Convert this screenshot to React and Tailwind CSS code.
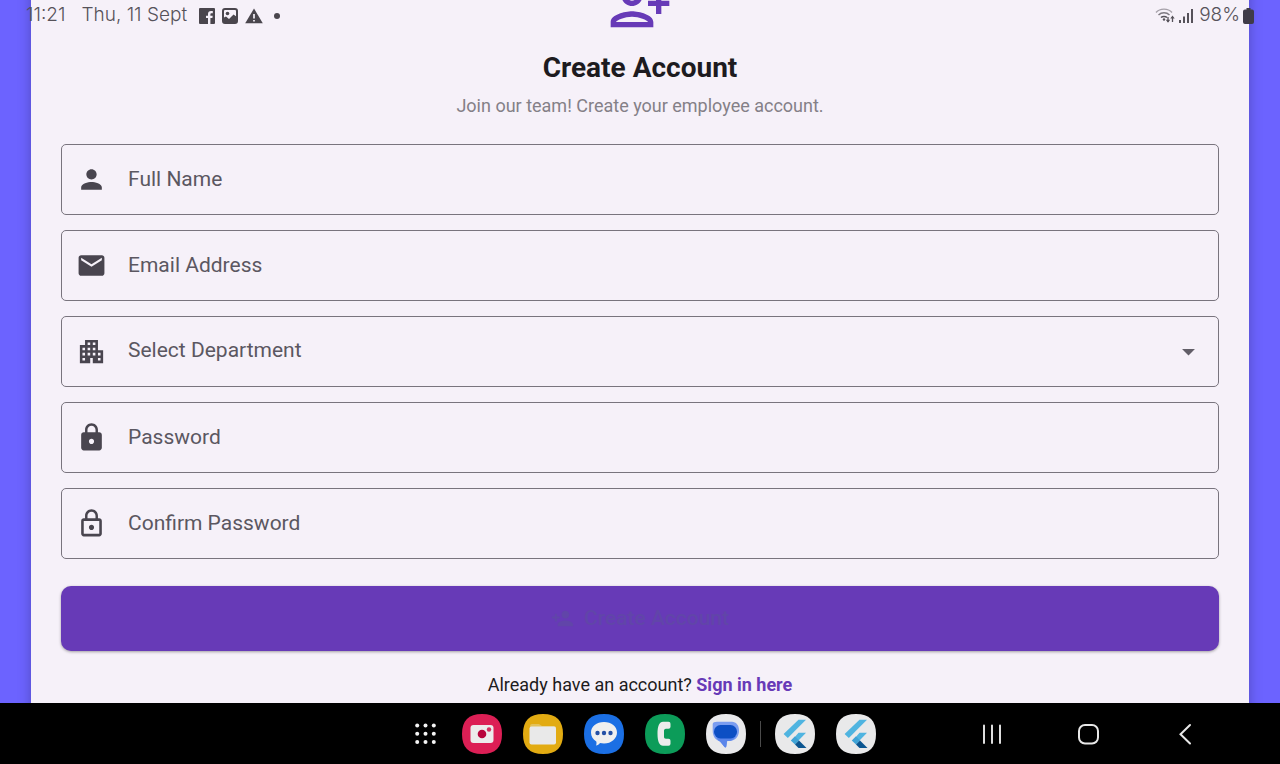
import React from "react";
import {
  MdPerson,
  MdEmail,
  MdApartment,
  MdLock,
  MdLockOutline,
  MdPersonAdd,
  MdArrowDropDown,
} from "react-icons/md";

function FacebookGlyph() {
  return (
    <svg viewBox="0 0 16 16" className="size-4" aria-hidden="true">
      <path
        fill="currentColor"
        d="M1 0h14a1 1 0 0 1 1 1v14a1 1 0 0 1-1 1h-3.600V10h2l.3-2.300h-2.300V6.300c0-.7.3-1.100 1.200-1.100h1.200V3.100c-.3 0-1-.1-1.800-.1-1.900 0-3 1.100-3 3v1.700H7V10h2v6H1a1 1 0 0 1-1-1V1a1 1 0 0 1 1-1z"
      />
    </svg>
  );
}

function PictureGlyph() {
  return (
    <svg viewBox="0 0 16 16" className="size-4" aria-hidden="true">
      <rect x="1" y="1" width="14" height="14" rx="2" fill="none" stroke="currentColor" strokeWidth="2" />
      <circle cx="5.500" cy="5.500" r="1.800" fill="currentColor" />
      <path fill="currentColor" d="M1 10l3-1.500 3 2.500 4.500-4.500L15 9v4a2 2 0 0 1-2 2H3a2 2 0 0 1-2-2z" />
    </svg>
  );
}

function WarningGlyph() {
  return (
    <svg viewBox="0 0 18 16" className="h-4 w-[18px]" aria-hidden="true">
      <path fill="currentColor" d="M9 .5L17.800 15.300H.2z" />
      <path d="M9 6v4.500M9 12v1.600" stroke="#f6f1f9" strokeWidth="1.700" />
    </svg>
  );
}

function WifiGlyph() {
  return (
    <svg viewBox="0 0 20 17" className="h-[17px] w-5" fill="none" stroke="currentColor" aria-hidden="true">
      <path d="M1 5.500C5 1 13 1 17 5.500" strokeWidth="1.300" opacity=".5" />
      <path d="M3.500 8C6.500 5 11.500 5 14.500 8" strokeWidth="1.400" opacity=".75" />
      <path d="M6 10.500C7.500 9 10.500 9 12 10.500" strokeWidth="1.500" />
      <circle cx="9" cy="12.500" r="1.200" fill="currentColor" stroke="none" />
      <path d="M13 10v5M17.500 15v-5" strokeWidth="1.300" />
      <path d="M10.800 12.800h4.400L13 15.800zM15.300 11.500h4.400L17.500 8.500z" fill="currentColor" stroke="none" />
    </svg>
  );
}

function SignalGlyph() {
  return (
    <svg viewBox="0 0 14 16" className="h-4 w-3.5" fill="currentColor" aria-hidden="true">
      <rect x="0" y="12" width="2" height="3" />
      <rect x="4" y="8.500" width="2" height="6.500" />
      <rect x="8" y="5" width="2" height="10" />
      <rect x="12" y="1" width="2" height="14" />
    </svg>
  );
}

function BatteryGlyph() {
  return (
    <svg viewBox="0 0 11 16" className="h-4 w-[11px]" fill="currentColor" aria-hidden="true">
      <path d="M3.500 0h4v1.500H9a2 2 0 0 1 2 2V14a2 2 0 0 1-2 2H2a2 2 0 0 1-2-2V3.500a2 2 0 0 1 2-2h1.500z" />
    </svg>
  );
}

function StatusBar() {
  return (
    <header className="absolute inset-x-0 top-0 flex h-[31px] items-center justify-between px-[26px] font-['Inter',sans-serif] text-[19px] text-[#56525a]">
      <div className="flex items-center">
        <span className="font-light">11:21</span>
        <span className="ml-4 font-light">Thu, 11 Sept</span>
        <div className="ml-3 flex items-center gap-[7px] text-[#4a464d]">
          <FacebookGlyph />
          <PictureGlyph />
          <WarningGlyph />
          <span className="ml-1 size-1.5 rounded-full bg-[#4a464d]" />
        </div>
      </div>
      <div className="flex items-center">
        <WifiGlyph />
        <span className="ml-1 mr-1.5"><SignalGlyph /></span>
        <span className="mr-[3px] font-light">98%</span>
        <span className="text-[#3f3b48]"><BatteryGlyph /></span>
      </div>
    </header>
  );
}

const frame =
  "flex h-[71px] items-center rounded-[5px] border border-[#79747e] px-[14px] text-[#49454f]";
const control =
  "h-full min-w-0 flex-1 appearance-none bg-transparent pb-0.5 pl-[21px] text-[21px] text-[#5b5761] outline-none placeholder:text-[#5b5761]";

function Field({ id, label, type, icon: Icon }) {
  return (
    <label htmlFor={id} className={frame}>
      <Icon className="size-[31px]" aria-hidden="true" />
      <input id={id} type={type} placeholder={label} aria-label={label} className={control} />
    </label>
  );
}

function DepartmentField() {
  return (
    <label htmlFor="department" className={frame}>
      <MdApartment className="size-[31px]" aria-hidden="true" />
      <select id="department" defaultValue="" aria-label="Department" className={control}>
        <option value="">Select Department</option>
      </select>
      <MdArrowDropDown className="pointer-events-none size-[31px] text-[#625e68]" aria-hidden="true" />
    </label>
  );
}

const squircle = "M20 0C33.500 0 40 6.500 40 20S33.500 40 20 40 0 33.500 0 20 6.500 0 20 0z";

function AppIcon({ label, fill, children }) {
  return (
    <button type="button" aria-label={label} className="size-10">
      <svg viewBox="0 0 40 40" className="size-10" aria-hidden="true">
        <path d={squircle} fill={fill} />
        {children}
      </svg>
    </button>
  );
}

function FlutterIcon({ label }) {
  return (
    <AppIcon label={label} fill="#e9e9ea">
      <path fill="#4fb4e0" d="M23.500 5.700H31L12.800 24l-4.200-4z" />
      <path fill="#4fb4e0" d="M23.500 18.700H31l-7.500 7.800L16.500 27z" />
      <path fill="#3fa3d6" d="M15.800 26.500l4.200-4.200 4 4.200-4 4z" />
      <path fill="#0b5590" d="M20 30.500l4-4 7.500 7.500H23.500z" />
    </AppIcon>
  );
}

function Taskbar() {
  return (
    <footer className="flex h-[61px] shrink-0 items-center justify-end bg-black pr-[81px]">
      <div className="flex items-center gap-[21px]">
        <button type="button" aria-label="All apps" className="size-[30px]">
          <svg viewBox="0 0 30 30" className="size-[30px]" fill="#f4f4f4" aria-hidden="true">
            {[6.5, 14.7, 23].map((y) =>
              [6.2, 14.5, 22.8].map((x) => (
                <circle key={x + "-" + y} cx={x} cy={y} r="2" />
              ))
            )}
          </svg>
        </button>
        <AppIcon label="Screen recorder" fill="#dc1f55">
          <rect x="8.500" y="11" width="23" height="18" rx="3" fill="#ececec" />
          <circle cx="20" cy="20" r="4.300" fill="#b8053c" />
          <circle cx="27" cy="15.500" r="2.200" fill="#d5305f" />
        </AppIcon>
        <AppIcon label="My files" fill="#e2ab12">
          <path fill="#e3c25a" d="M7 12a2 2 0 0 1 2-2h7l3 2h12a2 2 0 0 1 2 2v4H7z" />
          <rect x="6.500" y="12.500" width="26.500" height="18" rx="2" fill="#e9e9e9" />
        </AppIcon>
        <AppIcon label="Messages" fill="#1b6fe4">
          <path fill="#efefef" d="M20 8c7.500 0 13 4.500 13 10.500S27.500 29.500 20 29.500c-1.500 0-2.800-.2-4-.5-1 1.500-2.500 2.500-4 2.500.5-1 .7-2.500.3-4C9 25.500 7 22.500 7 18.500 7 12.500 12.500 8 20 8z" />
          <circle cx="13.500" cy="19" r="2.200" fill="#2450a5" />
          <circle cx="20" cy="19" r="2.200" fill="#2450a5" />
          <circle cx="26.500" cy="19" r="2.200" fill="#2450a5" />
        </AppIcon>
        <AppIcon label="Phone" fill="#0c9c59">
          <path fill="#ececec" d="M18 7.700h5.500a2 2 0 0 1 2 2v3a2 2 0 0 1-2 2h-2.500c-1.500 0-2 1-2 2v6c0 1 .5 2 2 2h2.500a2 2 0 0 1 2 2v3a2 2 0 0 1-2 2H18c-3.500 0-5.500-4-5.500-12s2-12 5.500-12z" />
        </AppIcon>
        <AppIcon label="Google Messages" fill="#e9e9eb">
          <path fill="#7b9df0" d="M11 7.700h15c4 0 7 3.500 7 8.500 0 6-3 9.500-8.500 10.800h-3.200l-1 5.500c-.2 1-1.100 1.300-1.800.6L14 27.500c-5-1.500-7.300-6-7.300-10.500V10c0-1.500 2-2.300 4.300-2.300z" />
          <path fill="#5c86ea" d="M10 22h20c-1.500 3-4 4.500-7 5h-2l-.7 5.500c-.2 1-1.100 1.300-1.800.6L14 27.500c-2-.8-3-2.500-4-5.500z" />
          <rect x="8" y="11" width="23" height="13.500" rx="6.500" fill="#0d4fc4" />
        </AppIcon>
      </div>
      <span className="mx-[14px] h-[26px] w-px bg-[#4b4b4b]" />
      <div className="flex items-center gap-[21px]">
        <FlutterIcon label="Flutter app one" />
        <FlutterIcon label="Flutter app two" />
      </div>
      <nav aria-label="System" className="ml-[101px] flex items-center gap-[69px]">
        <button type="button" aria-label="Recents" className="size-7">
          <svg viewBox="0 0 28 28" className="size-7" stroke="#dedede" strokeWidth="2" strokeLinecap="round" aria-hidden="true">
            <path d="M7 5.500v17.500M15 5.500v17.500M23 5.500v17.500" />
          </svg>
        </button>
        <button type="button" aria-label="Home" className="size-7">
          <svg viewBox="0 0 28 28" className="size-7" fill="none" stroke="#e8e8e8" strokeWidth="2" aria-hidden="true">
            <rect x="5" y="5" width="19" height="18.500" rx="6" />
          </svg>
        </button>
        <button type="button" aria-label="Back" className="size-7">
          <svg viewBox="0 0 28 28" className="size-7" fill="none" stroke="#e8e8e8" strokeWidth="2" strokeLinecap="round" aria-hidden="true">
            <path d="M19 5l-9.500 9.200L19 23.500" />
          </svg>
        </button>
      </nav>
    </footer>
  );
}

export default function App() {
  return (
    <div className="relative flex h-screen flex-col overflow-hidden bg-[#6c63ff] font-['Roboto',sans-serif]">
      <main className="min-h-0 flex-1 overflow-hidden px-[31px]">
        <section className="-mt-[26px] flex min-h-full flex-col bg-[#f6f1f9] px-[30px] pb-12 shadow-[0_4px_12px_rgba(0,0,0,0.25)]">
          <svg viewBox="0 0 24 24" className="size-16 self-center fill-[#673ab7]" aria-hidden="true">
            <path d="M13 8c0-2.210-1.790-4-4-4S5 5.790 5 8s1.790 4 4 4 4-1.790 4-4zm-2 0c0 1.100-.9 2-2 2s-2-.9-2-2 .9-2 2-2 2 .9 2 2zM1 18v2h16v-2c0-2.660-5.330-4-8-4s-8 1.340-8 4zm2 0c.2-.71 3.300-2 6-2 2.690 0 5.780 1.280 6 2H3zm17-3v-3h3v-2h-3V7h-2v3h-3v2h3v3h2z" />
          </svg>
          <h1 className="mt-3 text-center text-[28px] leading-9 font-bold text-[#1d1b20]">Create Account</h1>
          <p className="mt-2 text-center text-lg leading-6 text-[#848087]">
            Join our team! Create your employee account.
          </p>
          <form className="mt-[26px] flex flex-col" onSubmit={(e) => e.preventDefault()}>
            <div className="flex flex-col gap-[15px]">
              <Field id="full-name" label="Full Name" type="text" icon={MdPerson} />
              <Field id="email" label="Email Address" type="email" icon={MdEmail} />
              <DepartmentField />
              <Field id="password" label="Password" type="password" icon={MdLock} />
              <Field id="confirm-password" label="Confirm Password" type="password" icon={MdLockOutline} />
            </div>
            <button
              type="submit"
              className="mt-[27px] flex h-[65px] items-center justify-center gap-2.5 rounded-[10px] bg-[#673ab7] text-[21px] font-medium text-[#6145a9] shadow-[0_1px_3px_rgba(0,0,0,0.35)]"
            >
              <MdPersonAdd className="size-[23px]" aria-hidden="true" />
              Create Account
            </button>
          </form>
          <p className="mt-[22px] text-center text-lg leading-6 text-[#1d1b20]">
            Already have an account?{" "}
            <a href="#sign-in" className="font-bold text-[#673ab7]">Sign in here</a>
          </p>
        </section>
      </main>
      <Taskbar />
      <StatusBar />
    </div>
  );
}
